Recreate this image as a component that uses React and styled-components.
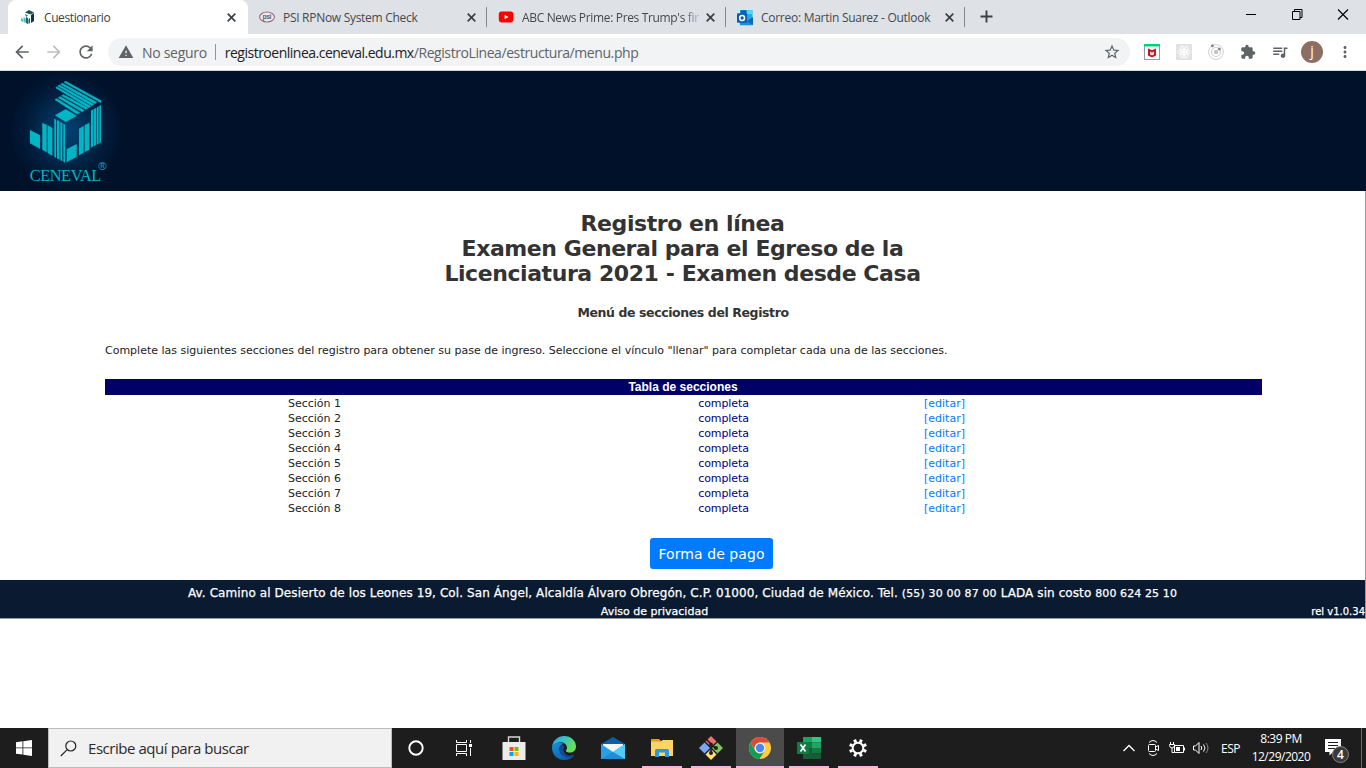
import React from "react";
import styled, { createGlobalStyle, css } from "styled-components";
import {
  MdArrowBack, MdArrowForward, MdRefresh, MdStarBorder, MdExtension,
  MdQueueMusic, MdMoreVert, MdWarning,
} from "react-icons/md";

const ui = `"Open Sans", "Noto Sans", sans-serif`;
const verdana = `"DejaVu Sans", Verdana, sans-serif`;

const Global = createGlobalStyle`
  * { box-sizing: border-box; }
  html, body { margin: 0; padding: 0; background: #fff; overflow: hidden; }
  svg { display: block; flex: none; }
`;

const Screen = styled.div`
  width: 1366px;
  height: 768px;
  display: flex;
  flex-direction: column;
  font-family: ${ui};
  overflow: hidden;
`;

const Label = styled.span`
  font-size: ${(p) => p.$size || 12}px;
  letter-spacing: ${(p) => p.$ls || 0}px;
  color: ${(p) => p.$color || "inherit"};
  white-space: pre;
`;

/* Browser tabs */
const TabStrip = styled.div`
  height: 34px;
  flex: none;
  display: flex;
  background: #dee1e6;
  padding-left: 8px;
`;

const Tab = styled.div`
  width: ${(p) => (p.$active ? 240 : 239)}px;
  height: 34px;
  display: flex;
  align-items: center;
  color: #45494d;
  padding: 0 11px;
  ${(p) => p.$active && css`
    padding: 0 12px;
    background: #fff;
    border-radius: 8px 8px 0 0;
    color: #3c4043;
  `}
`;

const TabTitle = styled.div`
  flex: 1;
  min-width: 0;
  margin: 0 8px;
  overflow: hidden;
  line-height: 18px;
  ${(p) => p.$fade && css`
    margin-right: 1px;
    mask-image: linear-gradient(90deg, #000 162px, rgba(0, 0, 0, 0.15) 178px);
  `}
`;

const TabDivider = styled.i`
  width: 1px;
  height: 20px;
  margin: 7px 0 0 -1px;
  background: #85888c;
`;

const NewTab = styled.div`
  margin: 10px 0 0 15px;
`;

const WindowButtons = styled.div`
  margin-left: auto;
  display: flex;
  gap: 34px;
  padding: 9px 17px 0 0;
`;

/* Address bar */
const Toolbar = styled.div`
  height: 37px;
  flex: none;
  display: flex;
  align-items: center;
  background: #fff;
  border-bottom: 1px solid #d3d5d9;
  color: #5f6368;
  padding: 0 12px;
`;

const NavButtons = styled.div`
  display: flex;
  width: 96px;
  gap: 12px;
`;

const Omnibox = styled.div`
  width: 1022px;
  flex: none;
  height: 28px;
  border-radius: 14px;
  background: #f1f3f4;
  display: flex;
  align-items: center;
  padding: 0 9px 0 10px;
`;

const OmniDivider = styled.i`
  width: 1px;
  height: 16px;
  background: #909397;
  margin: 0 9px 0 8px;
`;

const Extensions = styled.div`
  flex: 1;
  display: flex;
  align-items: center;
  padding-left: 14px;
  gap: 16px;
`;

const MediaIcon = styled(MdQueueMusic)`
  margin: 0 -1px;
`;

const Avatar = styled.div`
  width: 22px;
  height: 22px;
  flex: none;
  border-radius: 50%;
  background: #8d6e63;
  color: #fff;
  font-size: 14px;
  line-height: 20px;
  text-align: center;
  margin: 0 -3px;
`;

/* Web page */
const Page = styled.div`
  flex: 1;
  display: flex;
  flex-direction: column;
  font-family: ${verdana};
`;

const Banner = styled.header`
  height: 120px;
  background: radial-gradient(ellipse 58px 62px at 66px 60px, #014377 0, #013057 35%, #011b3a 70%, #001129 100%);
`;

const Main = styled.main`
  height: 389px;
  border-right: 1px solid #999;
  display: flex;
  flex-direction: column;
  align-items: center;
  padding: 20px 0 0 2px;
  color: #333;
`;

const Title = styled.h1`
  margin: 0;
  padding-right: 2px;
  font-size: 22px;
  line-height: 25px;
  letter-spacing: -0.43px;
  text-align: center;
`;

const Subtitle = styled.h2`
  margin: 18px 0 0;
  padding-right: 1px;
  font-size: 12.5px;
  line-height: 18px;
  letter-spacing: -0.4px;
`;

const Intro = styled.p`
  width: 1157px;
  margin: 20px 0;
  font-size: 11px;
  line-height: 17px;
  letter-spacing: -0.006px;
  color: #222;
`;

const Table = styled.section`
  width: 1157px;
  font-size: 11px;
  color: #222;
`;

const TableHead = styled.div`
  height: 16px;
  margin-bottom: 1px;
  padding-right: 1px;
  background: #006;
  color: #fff;
  font: bold 12px/16px "Liberation Sans", Arial, sans-serif;
  text-align: center;
`;

const Row = styled.div`
  display: grid;
  grid-template-columns: 419px 399px 1fr;
  height: 15px;
  line-height: 15px;
  text-align: center;
`;

const Status = styled.span`
  color: #000080;
  letter-spacing: -0.1px;
`;

const EditLink = styled.a`
  color: #007bff;
  text-align: left;
  padding-left: 1px;
`;

const PayButton = styled.button`
  width: 123px;
  height: 31px;
  margin: 22px 0 0 56px;
  padding: 1px 0 0;
  border: 0;
  border-radius: 3px;
  background: #007bff;
  color: #fff;
  font: 14px/30px ${verdana};
  letter-spacing: 0.07px;
`;

const Footer = styled.footer`
  height: 39px;
  background: #0a1a30;
  border-right: 1px solid #999;
  border-bottom: 1px solid #999;
  color: #fff;
  text-align: center;
  -webkit-text-stroke: 0.25px #fff;
`;

const Address = styled.div`
  height: 22px;
  line-height: 24px;
`;

const FooterRow = styled.div`
  display: grid;
  grid-template-columns: 1309px 56px;
  height: 16px;
  line-height: 19px;
`;

const Release = styled.span`
  text-align: right;
  line-height: 16px;
`;

/* Taskbar */
const Taskbar = styled.div`
  height: 40px;
  flex: none;
  display: flex;
  background: #1d1d1d;
  color: #fff;
`;

const StartButton = styled.div`
  width: 48px;
  display: grid;
  place-items: center;
`;

const SearchBox = styled.div`
  width: 344px;
  margin-right: 1px;
  border: 1px solid #bcbcbc;
  background: #f1f1f1;
  color: #2b2b2b;
  display: flex;
  align-items: center;
  padding-left: 11px;
  gap: 11px;
`;

const TaskButton = styled.div`
  width: 48px;
  margin-right: 1px;
  height: 40px;
  display: flex;
  flex-direction: column;
  align-items: center;
  background: ${(p) => (p.$active ? "#4b4b4b" : "transparent")};
`;

const TaskIcon = styled.div`
  height: 38px;
  padding-top: 2px;
  padding-right: ${(p) => p.$nudge || 0}px;
  display: grid;
  place-items: center;
`;

const OpenMark = styled.i`
  width: ${(p) => (p.$active ? 48 : 40)}px;
  height: 2px;
  background: #ffb1dc;
`;

const Tray = styled.div`
  margin-left: auto;
  display: flex;
  align-items: center;
  padding-right: 4px;
`;

const TrayIcons = styled.div`
  display: flex;
  align-items: center;
  gap: 6px;
  margin-right: 11px;
`;

const Clock = styled.div`
  width: 84px;
  padding-right: 2px;
  display: flex;
  flex-direction: column;
  align-items: center;
  line-height: 18px;
`;

const Notifications = styled.div`
  padding-top: 8px;
`;

const ShowDesktop = styled.i`
  width: 1px;
  height: 40px;
  background: #6a6a6a;
  margin-left: 9px;
`;

const CloseX = () => (
  <svg width="9" height="9" viewBox="0 0 9 9"><path d="M.7.7l7.6 7.6M8.3.7L.7 8.3" stroke="#3c4043" strokeWidth="1.7" /></svg>
);

const roofStripes = [
  "197,46 303,104 303,110 192,49", "187,52 290,109 284,113 182,55",
  "178,57 281,115 275,119 174,60", "170,62 272,121 266,125 168,66",
  "190,86 264,126 257,130 185,89", "181,92 252,133 246,137 175,95",
  "170,98 239,140 231,144 165,101",
];

const cubeShapes = [
  "165,148 197,130 230,149 197,168",
  "273,134 280,130 280,241 273,245", "282,129 288,126 288,237 282,240",
  "290,125 296,121 296,233 290,236", "298,120 303,117 303,229 298,232",
  "90,192 120,208 120,248 90,232", "127,170 140,177 140,259 127,251",
  "143,178 157,186 157,269 143,261", "163,158 168,161 168,275 163,272",
  "171,162 178,166 178,281 171,277", "181,168 187,171 187,286 181,282",
  "190,173 195,176 195,290 190,287", "200,250 230,234 230,272 200,289",
  "237,188 251,180 251,260 237,268", "254,178 268,170 268,251 254,258",
];

const CenevalLogo = () => (
  <svg width="150" height="120" viewBox="0 15 450 360" fill="#00b5c4">
    {roofStripes.map((points) => <polygon key={points} points={points} stroke="#00b5c4" strokeWidth="2" />)}
    {cubeShapes.map((points) => <polygon key={points} points={points} stroke="#00b5c4" strokeWidth=".5" />)}
    <text x="89" y="345" fontFamily="Liberation Serif, serif" fontSize="49" letterSpacing="-1.2">
      CENEVAL<tspan x="295" y="312" fontFamily="Liberation Sans, sans-serif" fontSize="34" letterSpacing="0">®</tspan>
    </text>
  </svg>
);

const CubeIcon = () => (
  <svg width="16" height="16" viewBox="0 0 16 16">
    <path d="M5 3.5L9 1l5 2.5-3.5 2z" fill="#15515d" />
    <path d="M11 6l3-2v8l-3 2z" fill="#12344b" />
    <path d="M5 5l3 1.5L6 8z" fill="#1d8294" />
    <path d="M1 9l2 1v3l-2-1zM3.500 8l2 1v5l-2-1z" fill="#58c0b0" />
    <path d="M6 8l2 1v6l-2-1zM8.500 10L10 9v5l-1.500 1z" fill="#16627b" />
    <path d="M5 10l1 .5V13l-1-.5zM10 4.500l2 .5-1 1z" fill="#d5a24c" />
  </svg>
);

const PsiIcon = () => (
  <svg width="16" height="16" viewBox="0 0 16 16">
    <ellipse cx="8" cy="8" rx="7.400" ry="5" fill="#eee9ee" stroke="#946a7e" strokeWidth="1.100" />
    <text x="3.500" y="10" fontFamily="Liberation Sans, sans-serif" fontWeight="bold" fontSize="7" textLength="9" fill="#5b6679">psi</text>
  </svg>
);

const YoutubeIcon = () => (
  <svg width="16" height="16" viewBox="0 0 16 16">
    <rect x=".8" y="2.600" width="14.600" height="10.800" rx="2.800" fill="#f00" />
    <path d="M6.600 5.700v4.600L10.400 8z" fill="#fff" />
  </svg>
);

const OutlookIcon = () => (
  <svg width="16" height="17" viewBox="0 0 16.500 17">
    <path d="M3.500 1H16v10H3.500z" fill="#28a8ea" />
    <path d="M3.500 1H10v4H3.500z" fill="#0364b8" />
    <path d="M10 1h6v4h-6z" fill="#50d9ff" />
    <path d="M3 8l7 4 7-4v8.500H3z" fill="#1490df" />
    <path d="M17 8v8.500L10 12z" fill="#1066b5" />
    <rect x="0" y="4" width="10.500" height="10" rx="1" fill="#0a5fb0" />
    <circle cx="5.300" cy="9" r="2.500" fill="none" stroke="#fff" strokeWidth="1.600" />
  </svg>
);

const tabs = [
  { title: "Cuestionario", icon: <CubeIcon />, active: true, ls: -0.4 },
  { title: "PSI RPNow System Check", icon: <PsiIcon />, divider: true, ls: -0.29 },
  { title: "ABC News Prime: Pres Trump's fir", icon: <YoutubeIcon />, divider: true, fade: true, ls: -0.34 },
  { title: "Correo: Martin Suarez - Outlook", icon: <OutlookIcon />, divider: true, ls: -0.27 },
];

const McAfeeIcon = () => (
  <svg width="16" height="16" viewBox="0 0 16 16">
    <rect x=".5" y=".5" width="15" height="15" fill="#fff" stroke="#9699a5" />
    <path d="M0 0h16v2.500H0z" fill="#0ccc79" />
    <path d="M4 4.500l4 1.700 4-1.700v7L8 13.500l-4-2z" fill="#c5161d" />
    <path d="M6 7.500l2 1 2-1v3l-2 1-2-1z" fill="#f5dada" />
  </svg>
);

const ReactIcon = () => (
  <svg width="16" height="16" viewBox="0 0 16 16" fill="none" stroke="#fff" strokeWidth=".9">
    <path d="M0 0h16v16H0z" fill="#e2e2e2" stroke="none" />
    <ellipse cx="8" cy="8" rx="6.300" ry="2.500" />
    <ellipse cx="8" cy="8" rx="6.300" ry="2.500" transform="rotate(60 8 8)" />
    <ellipse cx="8" cy="8" rx="6.300" ry="2.500" transform="rotate(120 8 8)" />
    <circle cx="8" cy="8" r="1.200" fill="#fff" />
  </svg>
);

const OrbitIcon = () => (
  <svg width="16" height="16" viewBox="0 0 16 16" fill="none" stroke="#cfcfcf">
    <circle cx="8" cy="8" r="7.400" />
    <circle cx="8" cy="8" r="4.500" strokeWidth="1.200" />
    <circle cx="8" cy="8" r="2.200" fill="#c4c4c4" stroke="none" />
    <circle cx="4.400" cy="1.800" r="1.500" fill="#888" stroke="none" />
    <circle cx="11.300" cy="5" r="1.500" fill="#888" stroke="none" />
  </svg>
);

const WindowsIcon = () => (
  <svg width="16" height="16" viewBox="0 0 16 16" fill="#fff">
    <path d="M0 2.300L6.500 1.300V7.500H0zM7.300 1.200L16 0v7.500H7.300zM0 8.300h6.500v6.300L0 13.700zM7.300 8.300H16V16l-8.700-1.200z" />
  </svg>
);

const SearchIcon = () => (
  <svg width="17" height="17" viewBox="0 0 17 17" fill="none" stroke="#222" strokeWidth="1.200">
    <circle cx="10.800" cy="6" r="5" /><path d="M7.200 9.600L.8 16" />
  </svg>
);

const CortanaIcon = () => (
  <svg width="18" height="18" viewBox="0 0 18 18"><circle cx="9" cy="9" r="6.700" fill="none" stroke="#fff" strokeWidth="1.900" /></svg>
);

const TaskViewIcon = () => (
  <svg width="18" height="16" viewBox="0 0 18 16" fill="none" stroke="#fff">
    <path d="M1.500 0v2.500h10V0M1.500 16v-2.500h10V16M1.500 4.500h10v7h-10zM15.500 0v3M15.500 8v8" />
    <path d="M14 4h3v3h-3z" fill="#fff" stroke="none" />
  </svg>
);

const StoreIcon = () => (
  <svg width="24" height="24" viewBox="0 0 24 24">
    <path d="M6.500 7V1h11v6" fill="none" stroke="#d8d8d8" strokeWidth="1.400" />
    <path d="M.5 6h23v18H.5z" fill="#ececec" />
    <path d="M7.500 11h4v4h-4z" fill="#f25022" /><path d="M12.500 11h4v4h-4z" fill="#7fba00" />
    <path d="M7.500 16h4v4h-4z" fill="#00a4ef" /><path d="M12.500 16h4v4h-4z" fill="#ffb900" />
  </svg>
);

const EdgeIcon = () => (
  <svg width="24" height="24" viewBox="0 0 24 24">
    <defs>
      <linearGradient id="edgeTop" x1="0" y1="0" x2="1" y2=".4"><stop offset="0" stopColor="#2a9fdd" /><stop offset=".5" stopColor="#36c4cb" /><stop offset="1" stopColor="#6cdd50" /></linearGradient>
      <linearGradient id="edgeLow" x1="0" y1="0" x2="1" y2="1"><stop offset="0" stopColor="#1793dd" /><stop offset="1" stopColor="#0c4f9f" /></linearGradient>
    </defs>
    <path d="M0 11C1 4 6 0 12 0c7 0 12 5 12 10.500 0 4-3 6-6 6-3.500 0-4.500-1.300-4-2.200 1-1.100 1-1.800 1-2.500C15 7 9 5 5 7 2.500 8 .5 9.500 0 11z" fill="url(#edgeTop)" />
    <path d="M0 11C2 6 8 5.500 11.500 7.500 8 9 6.500 12.500 8 16c1.800 4 7 6 12 3.500 1.500-.7 2.500-1 1.500.5C19 23 15.500 24 12 24 5 24 0 18.500 0 11z" fill="url(#edgeLow)" />
    <path d="M8 10c-1.500 5 1 10 6 11.500 4 1 6-1 8-2.500-4 1.500-8 1-10-3-1-2-.6-4 .5-5.500C11 8.500 9 8.500 8 10z" fill="#114a91" />
  </svg>
);

const MailIcon = () => (
  <svg width="24" height="22" viewBox="0 0 24 22">
    <path d="M0 7l12-7 12 7v3H0z" fill="#0c5ea9" /><path d="M2 7h20v8H2z" fill="#f5f5f5" />
    <path d="M0 7l12 8 12-8v15H0z" fill="#24a1e8" /><path d="M0 22l12-7 12 7z" fill="#1e8ddb" />
    <path d="M24 7v15L12 15z" fill="#50cdf7" />
  </svg>
);

const FolderIcon = () => (
  <svg width="22" height="18" viewBox="0 0 22 18">
    <path d="M0 0h8l2 2h12v4H0z" fill="#e2a100" /><path d="M0 2.500h10L11.500 1H22v16H0z" fill="#fcd462" />
    <path d="M4 18V11.500Q4 10 5.500 10h11Q18 10 18 11.500V18h-4v-4.500H8V18z" fill="#3197dd" />
  </svg>
);

const GitIcon = () => (
  <svg width="24" height="24" viewBox="0 0 24 24">
    <path d="M12 0l5.500 5.500-5.500 5.500-5.500-5.500z" fill="#f17075" />
    <path d="M18.500 6.500L24 12l-5.500 5.500L13 12z" fill="#80c75b" />
    <path d="M12 13l5.500 5.500L12 24l-5.500-5.500z" fill="#ffe07a" />
    <path d="M5.500 6.500L11 12l-5.500 5.500L0 12z" fill="#78a8f5" />
    <path d="M7.500 3.500L12 8v8M12 9l4.500 3" stroke="#231f20" strokeWidth="1.700" fill="none" />
    <circle cx="12" cy="8.500" r="2" fill="#231f20" /><circle cx="12" cy="17" r="2" fill="#231f20" /><circle cx="17" cy="12" r="2" fill="#231f20" />
  </svg>
);

const ChromeIcon = () => (
  <svg width="22" height="22" viewBox="0 0 22 22">
    <circle cx="11" cy="11" r="11" fill="#ffcd40" />
    <path d="M1.500 5.500A11 11 0 0 1 20.500 5.500H11A5.500 5.500 0 0 0 6 13z" fill="#db4a3e" />
    <path d="M1.500 5.500A11 11 0 0 0 10.500 22l5.200-8.500A5.500 5.500 0 0 1 6.200 13.700z" fill="#109d58" />
    <circle cx="11" cy="11" r="5.400" fill="#f4f4f4" /><circle cx="11" cy="11" r="4.200" fill="#4688f4" />
  </svg>
);

const ExcelIcon = () => (
  <svg width="24" height="22" viewBox="0 0 24 22">
    <path d="M6 0h9v5.500H6z" fill="#21a366" /><path d="M15 0h9v5.500h-9z" fill="#33c481" />
    <path d="M6 5.500h9V11H6z" fill="#107c41" /><path d="M15 5.500h9V11h-9z" fill="#21a366" />
    <path d="M6 11h9v11H6z" fill="#185c37" /><path d="M15 11h9v5.500h-9z" fill="#107c41" /><path d="M15 16.500h9V22h-9z" fill="#185c37" />
    <rect y="5" width="12" height="12" rx=".6" fill="#107c41" />
    <path d="M3.500 7.500l5 7M8.500 7.500l-5 7" stroke="#fff" strokeWidth="1.700" />
  </svg>
);

const GearIcon = () => (
  <svg width="18" height="18" viewBox="0 0 18 18" fill="none" stroke="#fff">
    <circle cx="9" cy="9" r="5.300" strokeWidth="2" />
    {[0, 45, 90, 135, 180, 225, 270, 315].map((a) => (
      <path key={a} d="M9 0v3" strokeWidth="3" transform={`rotate(${a + 22.5} 9 9)`} />
    ))}
  </svg>
);

const apps = [
  { icon: <CortanaIcon />, nudge: 2 }, { icon: <TaskViewIcon />, nudge: 4 }, { icon: <StoreIcon />, nudge: 2 },
  { icon: <EdgeIcon /> }, { icon: <MailIcon /> }, { icon: <FolderIcon />, open: true },
  { icon: <GitIcon />, open: true }, { icon: <ChromeIcon />, open: true, active: true },
  { icon: <ExcelIcon />, open: true }, { icon: <GearIcon />, open: true },
];

const ChevronUp = () => (
  <svg width="18" height="18" viewBox="0 0 18 18"><path d="M3.500 12L9 6.500l5.500 5.500" fill="none" stroke="#fff" strokeWidth="1.300" /></svg>
);
const MeetIcon = () => (
  <svg width="18" height="18" viewBox="0 0 18 18" fill="none" stroke="#fff">
    <path d="M5 3.500q4-4 8 0M5 14.500q4 4 8 0" /><rect x="4.500" y="5.500" width="7" height="7" rx="1" /><path d="M11.500 8l3-1.500v5l-3-1.500" />
  </svg>
);
const BatteryIcon = () => (
  <svg width="18" height="18" viewBox="0 0 18 18" fill="none" stroke="#fff">
    <path d="M6.500 6.500h9v7h-9zM16.500 8.500v3M2.500 3v2M5.500 3v2M1.500 5.500h5v1Q6 9 4 9 2 9 1.500 6.500zM4 9v4.500h2" />
    <path d="M8 8h4v4H8z" fill="#fff" stroke="none" />
  </svg>
);
const SoundIcon = () => (
  <svg width="18" height="18" viewBox="0 0 18 18" fill="none" stroke="#fff">
    <path d="M1.500 7h2L7 3.500v11L3.500 11h-2zM9 7q1.500 2 0 4M11.500 5.500q3 3.500 0 7" /><path d="M14 4q4 5 0 10" stroke="#888" />
  </svg>
);
const NotificationIcon = () => (
  <svg width="28" height="28" viewBox="0 0 28 28">
    <path d="M1 1h16v13H9l-3.500 3.500V14H1z" fill="#fff" />
    <path d="M4 4.500h10M4 7.500h10M4 10.500h7" stroke="#1d1d1d" />
    <circle cx="16.500" cy="16.500" r="8" fill="#3a3a3a" stroke="#858585" />
    <text x="16.500" y="20.800" textAnchor="middle" fill="#fff" fontFamily="Open Sans, sans-serif" fontWeight="600" fontSize="12">4</text>
  </svg>
);

const sections = [1, 2, 3, 4, 5, 6, 7, 8];

export default function App() {
  return (
    <Screen>
      <Global />
      <TabStrip>
        {tabs.map((t) => (
          <React.Fragment key={t.title}>
            <Tab $active={t.active}>
              {t.icon}
              <TabTitle $fade={t.fade}><Label $ls={t.ls}>{t.title}</Label></TabTitle>
              <CloseX />
            </Tab>
            {t.divider && <TabDivider />}
          </React.Fragment>
        ))}
        <NewTab>
          <svg width="13" height="13" viewBox="0 0 13 13"><path d="M6.500.5v12M.5 6.500h12" stroke="#3c4043" strokeWidth="1.900" /></svg>
        </NewTab>
        <WindowButtons>
          <svg width="12" height="11" viewBox="0 0 12 11"><path d="M1 5.500h10" stroke="#000" /></svg>
          <svg width="12" height="11" viewBox="0 0 12 11"><path d="M1.500 2.500h7.500v8H1.500zM3.500 2.500v-2h7.500v8H9" fill="none" stroke="#000" /></svg>
          <svg width="12" height="11" viewBox="0 0 12 11"><path d="M1 .5l10 10M11 .5l-10 10" stroke="#000" strokeWidth="1.100" /></svg>
        </WindowButtons>
      </TabStrip>

      <Toolbar>
        <NavButtons>
          <MdArrowBack size={20} />
          <MdArrowForward size={20} color="#bcbec1" />
          <MdRefresh size={20} />
        </NavButtons>
        <Omnibox>
          <MdWarning size={16} />
          <Label $size={14} $ls={-0.3} style={{ marginLeft: 8 }}>No seguro</Label>
          <OmniDivider />
          <Label $size={14} $ls={-0.5} $color="#202124">registroenlinea.ceneval.edu.mx</Label>
          <Label $size={14} $ls={-0.42}>/RegistroLinea/estructura/menu.php</Label>
          <MdStarBorder size={18} style={{ marginLeft: "auto" }} />
        </Omnibox>
        <Extensions>
          <McAfeeIcon /><ReactIcon /><OrbitIcon />
          <MdExtension size={16} /><MediaIcon size={18} /><Avatar>j</Avatar><MdMoreVert size={18} />
        </Extensions>
      </Toolbar>

      <Page>
        <Banner><CenevalLogo /></Banner>
        <Main>
          <Title>Registro en línea<br />Examen General para el Egreso de la<br />Licenciatura 2021 - Examen desde Casa</Title>
          <Subtitle>Menú de secciones del Registro</Subtitle>
          <Intro>Complete las siguientes secciones del registro para obtener su pase de ingreso. Seleccione el vínculo "llenar" para completar cada una de las secciones.</Intro>
          <Table>
            <TableHead>Tabla de secciones</TableHead>
            {sections.map((n) => (
              <Row key={n}>
                <span>Sección {n}</span>
                <Status>completa</Status>
                <EditLink>[editar]</EditLink>
              </Row>
            ))}
          </Table>
          <PayButton>Forma de pago</PayButton>
        </Main>
        <Footer>
          <Address>
            <Label $size={12} $ls={0.085}>Av. Camino al Desierto de los Leones 19, Col. San Ángel, Alcaldía Álvaro Obregón, C.P. 01000, Ciudad de México. Tel. </Label>
            <Label $size={11} $ls={0.15}>(55) 30 00 87 00</Label>
            <Label $size={12} $ls={0.085}> LADA sin costo </Label>
            <Label $size={11} $ls={0.1}>800 624 25 10</Label>
          </Address>
          <FooterRow>
            <Label $size={11}>Aviso de privacidad</Label>
            <Release><Label $size={10}>rel v1.0.34</Label></Release>
          </FooterRow>
        </Footer>
      </Page>

      <Taskbar>
        <StartButton><WindowsIcon /></StartButton>
        <SearchBox><SearchIcon /><Label $size={15} $ls={-0.45}>Escribe aquí para buscar</Label></SearchBox>
        {apps.map((a, i) => (
          <TaskButton key={i} $active={a.active}>
            <TaskIcon $nudge={a.nudge}>{a.icon}</TaskIcon>
            {a.open && <OpenMark $active={a.active} />}
          </TaskButton>
        ))}
        <Tray>
          <TrayIcons><ChevronUp /><MeetIcon /><BatteryIcon /><SoundIcon /></TrayIcons>
          <Label $size={12} $ls={-0.5}>ESP</Label>
          <Clock>
            <Label $size={12} $ls={-0.5}>8:39 PM</Label>
            <Label $size={12} $ls={-0.5}>12/29/2020</Label>
          </Clock>
          <Notifications><NotificationIcon /></Notifications>
          <ShowDesktop />
        </Tray>
      </Taskbar>
    </Screen>
  );
}
